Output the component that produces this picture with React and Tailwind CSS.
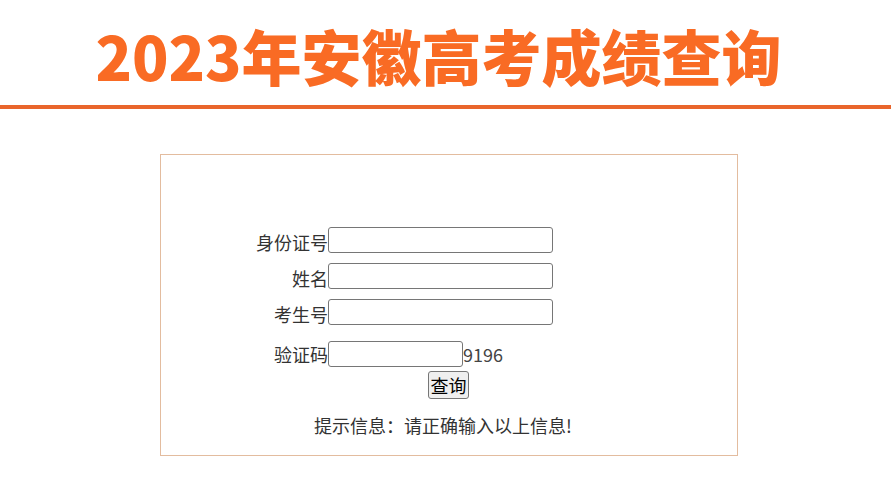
export default function App() {
  const font = { fontFamily: '"Microsoft YaHei", "Noto Sans CJK SC", "Noto Sans", sans-serif' };
  const rows = [
    { label: "身份证号", w: "w-[225px]" },
    { label: "姓名", w: "w-[225px]" },
    { label: "考生号", w: "w-[225px]" },
  ];

  return (
    <div className="min-h-screen bg-white" style={font}>
      {/* Header */}
      <div className="pt-[19px] pb-[14px] border-b-[4px] border-[#e9652b] text-center">
        <h1 className="text-[60px] leading-[72px] font-black text-[#f96b24] -ml-[14px]">
          2023年安徽高考成绩查询
        </h1>
      </div>

      {/* Form box */}
      <div className="mt-[45px] ml-[160px] w-[578px] h-[302px] border border-[#e3bc9f] pt-[72px] pl-[67px] text-[18px] text-[#333]">
        <div className="flex flex-col gap-[10px]">
          {rows.map((r) => (
            <div key={r.label} className="flex items-end">
              <span className="w-[100px] text-right leading-[22px]">{r.label}</span>
              <input className={`${r.w} h-[26px] border border-[#767676] rounded-[3px] bg-white`} />
            </div>
          ))}
        </div>
        <div className="flex items-center mt-[16px]">
          <span className="w-[100px] text-right leading-[22px]">验证码</span>
          <input className="w-[135px] h-[26px] border border-[#767676] rounded-[3px] bg-white" />
          <span className="leading-[22px] text-[#444]">9196</span>
        </div>
        <div className="mt-[4px] pl-[200px]">
          <button className="w-[41px] h-[28px] px-[1px] border border-[#767676] rounded-[3px] bg-[#efefef] text-[18px] leading-[24px] text-black">
            查询
          </button>
        </div>
        <p className="mt-[14px] pl-[86px] leading-[24px] text-[#333]">提示信息：请正确输入以上信息!</p>
      </div>
    </div>
  );
}
